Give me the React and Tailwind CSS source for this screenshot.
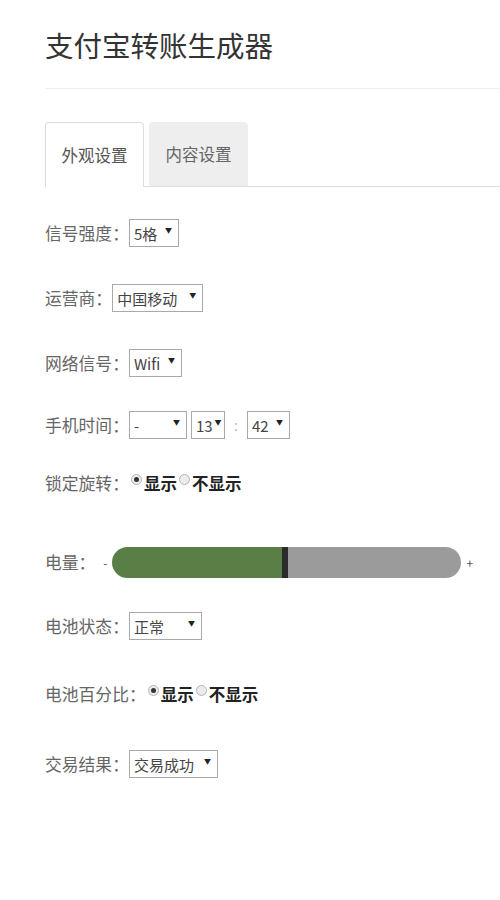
import React from 'react';

const Select = ({ value, width }) => (
  <div className={`inline-flex h-[28px] items-center justify-between border border-[#a9a9a9] bg-white pl-[4px] pr-[6px] text-[15px] text-[#444] ${width}`}>
    <span className='leading-none'>{value}</span>
    <span className='-mt-[5px] ml-[2px] text-[7px] leading-none text-[#222]'>▼</span>
  </div>
);

const Radio = ({ checked }) => (
  <span className='mx-[2px] inline-flex h-[11px] w-[11px] -translate-y-[4px] items-center justify-center rounded-full border border-[#b5b5b5] bg-[#ececec]'>
    {checked && <span className='h-[5px] w-[5px] rounded-full bg-[#333]' />}
  </span>
);

const Label = ({ children }) => (
  <span className='text-[16.8px] leading-none text-[#666]'>{children}</span>
);

const App = () => {
  return (
    <div className='min-h-[900px] bg-white pl-[45px] font-["Noto_Sans_CJK_SC",sans-serif]'>
      {/* title */}
      <h1 className='pt-[26px] text-[28.5px] leading-[38px] text-[#333]'>支付宝转账生成器</h1>
      <div className='mt-[24px] border-t border-[#eeeeee]' />

      {/* tabs */}
      <div className='mt-[33px] flex h-[65px] border-b border-[#dddddd]'>
        <div className='-mb-px flex w-[99px] items-center justify-center rounded-t-[4px] border border-b-0 border-[#dddddd] bg-white text-[16.5px] text-[#555]'>
          外观设置
        </div>
        <div className='ml-[5px] flex w-[99px] items-center justify-center rounded-t-[4px] bg-[#eeeeee] text-[16.5px] text-[#666]'>
          内容设置
        </div>
      </div>

      <div className='flex flex-col'>
        {/* 信号强度 */}
        <div className='mt-[32px] flex h-[28px] items-center'>
          <Label>信号强度：</Label>
          <Select value='5格' width='w-[50px]' />
        </div>
        {/* 运营商 */}
        <div className='mt-[37px] flex h-[28px] items-center'>
          <Label>运营商：</Label>
          <Select value='中国移动' width='w-[91px]' />
        </div>
        {/* 网络信号 */}
        <div className='mt-[36px] flex h-[30px] items-center'>
          <Label>网络信号：</Label>
          <Select value='Wifi' width='w-[53px]' />
        </div>
        {/* 手机时间 */}
        <div className='mt-[33px] flex h-[28px] items-center'>
          <Label>手机时间：</Label>
          <Select value='-' width='w-[58px]' />
          <span className='w-[4px]' />
          <Select value='13' width='w-[34px]' />
          <span className='w-[22px] text-center text-[14px] text-[#bbb]'>:</span>
          <Select value='42' width='w-[43px]' />
        </div>
        {/* 锁定旋转 */}
        <div className='mt-[30px] flex h-[28px] items-center'>
          <Label>锁定旋转：</Label>
          <Radio checked />
          <span className='text-[16.5px] font-bold text-[#222]'>显示</span>
          <Radio />
          <span className='text-[16.5px] font-bold text-[#222]'>不显示</span>
        </div>
        {/* 电量 */}
        <div className='mt-[50px] flex h-[31px] items-center'>
          <Label>电量：</Label>
          <span className='ml-[8px] text-[12px] text-[#555]'>-</span>
          <div className='ml-[4px] flex h-[31px] w-[349px] overflow-hidden rounded-full'>
            <div className='w-[170px] bg-[#5a7f46]' />
            <div className='w-[6px] bg-[#2b2b2b]' />
            <div className='flex-1 bg-[#9b9b9b]' />
          </div>
          <span className='ml-[6px] text-[12px] text-[#555]'>+</span>
        </div>
        {/* 电池状态 */}
        <div className='mt-[34px] flex h-[28px] items-center'>
          <Label>电池状态：</Label>
          <Select value='正常' width='w-[73px]' />
        </div>
        {/* 电池百分比 */}
        <div className='mt-[40px] flex h-[28px] items-center'>
          <Label>电池百分比：</Label>
          <Radio checked />
          <span className='text-[16.5px] font-bold text-[#222]'>显示</span>
          <Radio />
          <span className='text-[16.5px] font-bold text-[#222]'>不显示</span>
        </div>
        {/* 交易结果 */}
        <div className='mt-[42px] flex h-[28px] items-center'>
          <Label>交易结果：</Label>
          <Select value='交易成功' width='w-[89px]' />
        </div>
      </div>
    </div>
  );
};

export default App;
